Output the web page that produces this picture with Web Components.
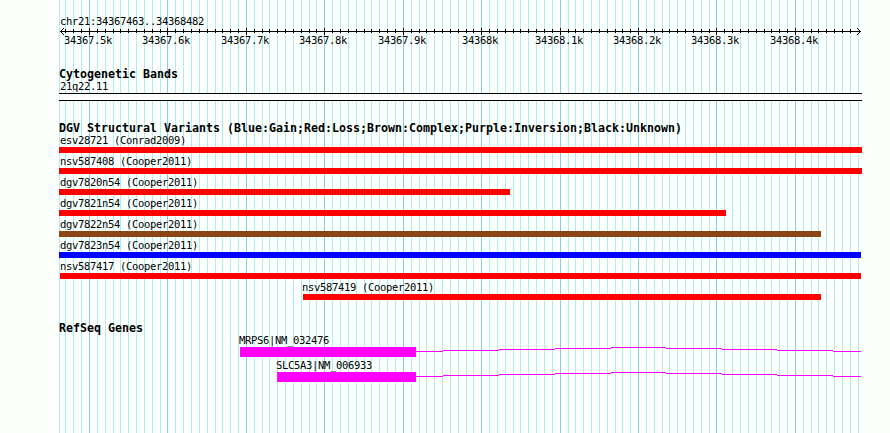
<!DOCTYPE html>
<html lang="en">
<head>
<meta charset="utf-8">
<title>chr21:34367463..34368482</title>
<style>
  body {
    margin: 0;
    background: #fcfffc;
    color: #000;
    font-family: "DejaVu Sans Mono", "Liberation Mono", monospace;
    font-size: 10.5px;
    letter-spacing: -0.32px;
  }
</style>
</head>
<body>
<genome-browser>
  <scale-ruler region="chr21:34367463..34368482"></scale-ruler>

  <genome-track heading="Cytogenetic Bands">
    <cyto-band name="21q22.11"></cyto-band>
  </genome-track>

  <genome-track heading="DGV Structural Variants (Blue:Gain;Red:Loss;Brown:Complex;Purple:Inversion;Black:Unknown)">
    <variant-bar name="esv28721 (Conrad2009)" start="59" end="862" color="#f00"></variant-bar>
    <variant-bar name="nsv587408 (Cooper2011)" start="59" end="862" color="#f00"></variant-bar>
    <variant-bar name="dgv7820n54 (Cooper2011)" start="59" end="510" color="#f00"></variant-bar>
    <variant-bar name="dgv7821n54 (Cooper2011)" start="59" end="726" color="#f00"></variant-bar>
    <variant-bar name="dgv7822n54 (Cooper2011)" start="59" end="821" color="#8b4513"></variant-bar>
    <variant-bar name="dgv7823n54 (Cooper2011)" start="59" end="861" color="#00f"></variant-bar>
    <variant-bar name="nsv587417 (Cooper2011)" start="60" end="861" color="#f00"></variant-bar>
    <variant-bar name="nsv587419 (Cooper2011)" start="303" end="821" color="#f00"></variant-bar>
  </genome-track>

  <genome-track heading="RefSeq Genes">
    <gene-model name="MRPS6|NM_032476" start="240" end="416"></gene-model>
    <gene-model name="SLC5A3|NM_006933" start="277" end="416"></gene-model>
  </genome-track>
</genome-browser>

<script>
  // x of every 10 bp line, the first one is the left edge of the panel
  const LINES = [
    59, 65, 73, 81, 89, 97, 105, 113, 120, 128, 136, 144, 152, 160,
    167, 175, 183, 191, 199, 207, 215, 222, 230, 238,
    246, 254, 262, 269, 277, 285, 293, 301, 309, 316,
    324, 332, 340, 348, 356, 364, 371, 379, 387, 395,
    403, 411, 419, 426, 434, 442, 450, 458, 466, 473,
    481, 489, 497, 505, 513, 520, 528, 536, 544, 552,
    560, 568, 575, 583, 591, 599, 607, 615, 622, 630,
    638, 646, 654, 662, 669, 677, 685, 693, 701, 709,
    716, 724, 732, 740, 748, 756, 764, 771, 779, 787,
    795, 803, 811, 818, 826, 834, 842, 850, 858
  ];

  // 100 bp marks
  const MAJOR = {
    89: "34367.5k", 167: "34367.6k", 246: "34367.7k", 324: "34367.8k",
    403: "34367.9k", 481: "34368k", 560: "34368.1k", 638: "34368.2k",
    716: "34368.3k", 795: "34368.4k"
  };

  const rect = (x, y, w, h, fill) =>
    `<rect x="${x}" y="${y}" width="${w}" height="${h}" fill="${fill}"/>`;

  class GenomeBrowser extends HTMLElement {
    constructor() {
      super();
      this.attachShadow({ mode: "open" });

      const grid = LINES.map((x) => rect(x, 0, 1, 433, MAJOR[x] ? "#87ceeb" : "#afeeee")).join("");

      this.shadowRoot.innerHTML = `
        <style>
          :host {
            display: block;
            position: relative;
            width: 890px;
            height: 433px;
            overflow: hidden;
          }
          .grid {
            position: absolute;
            top: 0;
            left: 0;
            shape-rendering: crispEdges;
          }
          .tracks {
            position: relative;
            display: flex;
            flex-direction: column;
            gap: 19px;
          }
          ::slotted(scale-ruler) {
            margin-bottom: -19px;
          }
          ::slotted(genome-track:last-child) {
            margin-top: 1px;
          }
        </style>
        <svg class="grid" width="890" height="433">${grid}</svg>
        <div class="tracks"><slot></slot></div>
      `;
    }
  }

  class ScaleRuler extends HTMLElement {
    constructor() {
      super();
      this.attachShadow({ mode: "open" });
    }

    connectedCallback() {
      const ticks = LINES.slice(1, -1).map((x) =>
        MAJOR[x] ? rect(x, 28, 1, 7, "#000") : rect(x, 29, 1, 4, "#000")
      ).join("");

      const labels = Object.keys(MAJOR).map((x) =>
        `<text x="${x - MAJOR[x].length * 3 - 1}" y="44">${MAJOR[x]}</text>`
      ).join("");

      this.shadowRoot.innerHTML = `
        <style>
          :host {
            display: block;
            height: 66px;
          }
          svg {
            display: block;
          }
          rect {
            shape-rendering: crispEdges;
          }
          path {
            fill: none;
            stroke: #000;
          }
        </style>
        <svg width="890" height="66">
          <text x="60" y="25">${this.getAttribute("region")}</text>
          ${rect(60, 31, 801, 1, "#000")}
          ${ticks}
          <path d="M64 28 60.5 31.5 64 35M857 28 860.5 31.5 857 35"/>
          ${labels}
        </svg>
      `;
    }
  }

  class GenomeTrack extends HTMLElement {
    constructor() {
      super();
      this.attachShadow({ mode: "open" });
    }

    connectedCallback() {
      this.shadowRoot.innerHTML = `
        <style>
          :host {
            display: flex;
            flex-direction: column;
          }
          .heading {
            height: 12px;
            line-height: 16px;
            padding-left: 59px;
            font-size: 11.63px;
            font-weight: bold;
            letter-spacing: 0;
            white-space: nowrap;
          }
        </style>
        <div class="heading">${this.getAttribute("heading")}</div>
        <slot></slot>
      `;
    }
  }

  const labelStyle = `
    :host {
      display: block;
    }
    .label {
      height: 15px;
      line-height: 17px;
      white-space: nowrap;
    }
  `;

  class CytoBand extends HTMLElement {
    constructor() {
      super();
      this.attachShadow({ mode: "open" });
    }

    connectedCallback() {
      this.shadowRoot.innerHTML = `
        <style>
          ${labelStyle}
          .label {
            padding-left: 60px;
          }
          .band {
            box-sizing: border-box;
            width: 803px;
            height: 8px;
            margin-left: 59px;
            border: solid #000;
            border-width: 1px 0;
            background: #fcfffc;
          }
        </style>
        <div class="label">${this.getAttribute("name")}</div>
        <div class="band"></div>
      `;
    }
  }

  class VariantBar extends HTMLElement {
    constructor() {
      super();
      this.attachShadow({ mode: "open" });
    }

    connectedCallback() {
      const start = Number(this.getAttribute("start"));
      const end = Number(this.getAttribute("end"));

      this.shadowRoot.innerHTML = `
        <style>
          ${labelStyle}
          .label {
            padding-left: ${Math.max(start - 1, 60)}px;
          }
          .bar {
            width: ${end - start}px;
            height: 6px;
            margin-left: ${start}px;
            background: ${this.getAttribute("color")};
          }
        </style>
        <div class="label">${this.getAttribute("name")}</div>
        <div class="bar"></div>
      `;
    }
  }

  class GeneModel extends HTMLElement {
    constructor() {
      super();
      this.attachShadow({ mode: "open" });
    }

    connectedCallback() {
      const start = Number(this.getAttribute("start"));
      const end = Number(this.getAttribute("end"));

      // the intron is a shallow arch, one pixel per step
      const steps = [end, 443, 499, 555, 611, 666, 722, 777, 833, 861];
      const heights = [4, 3, 2, 1, 0, 1, 2, 3, 4];
      const intron = heights.map((y, i) =>
        rect(steps[i], y, steps[i + 1] - steps[i], 1, "#f0f")
      ).join("");

      this.shadowRoot.innerHTML = `
        <style>
          ${labelStyle}
          .label {
            padding-left: ${start - 1}px;
          }
          svg {
            display: block;
            shape-rendering: crispEdges;
          }
        </style>
        <div class="label">${this.getAttribute("name")}</div>
        <svg width="890" height="10">
          ${rect(start, 0, end - start, 10, "#f0f")}
          ${intron}
        </svg>
      `;
    }
  }

  customElements.define("genome-browser", GenomeBrowser);
  customElements.define("scale-ruler", ScaleRuler);
  customElements.define("genome-track", GenomeTrack);
  customElements.define("cyto-band", CytoBand);
  customElements.define("variant-bar", VariantBar);
  customElements.define("gene-model", GeneModel);
</script>
</body>
</html>
